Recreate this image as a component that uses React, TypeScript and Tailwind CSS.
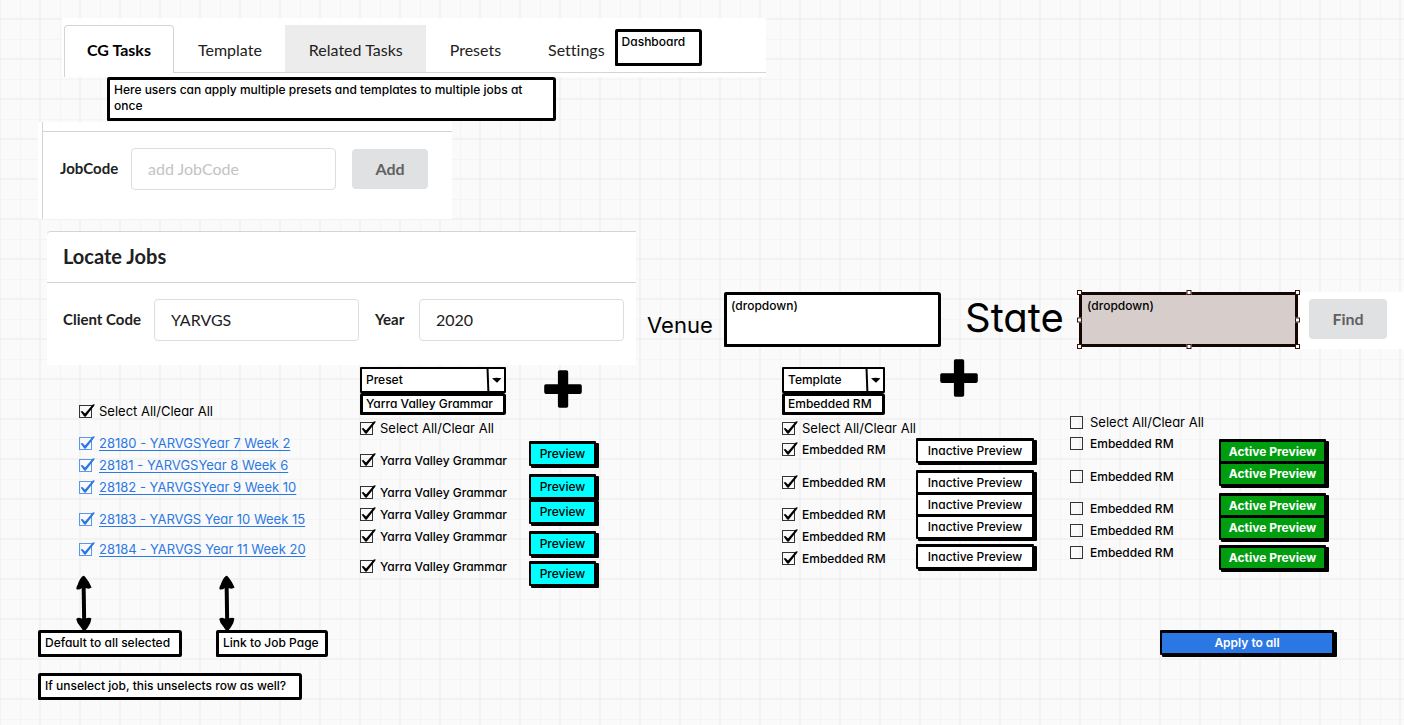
import type { ReactNode } from "react";
import clsx from "clsx";

const SKETCH = "border-[3px] border-black rounded-[2px_3px_2px_1px] bg-white";

type Item = { label: string; gap?: string; className?: string };

function Note({ children, className }: { children: ReactNode; className?: string }) {
  return (
    <div className={clsx(SKETCH, "px-[4px] leading-4 pt-[2px]", className)}>{children}</div>
  );
}

function Check({
  id,
  label,
  checked = true,
  href,
  className,
}: {
  id: string;
  label: string;
  checked?: boolean;
  href?: string;
  className?: string;
}) {
  return (
    <div className={clsx("flex h-[22px] items-center gap-[7px] whitespace-nowrap", className)}>
      <span className={clsx("relative flex", href ? "text-[#2b78e4]" : "text-black")}>
        <input
          id={id}
          type="checkbox"
          defaultChecked={checked}
          aria-label={label}
          className={clsx(
            "peer h-[13px] w-[13px] appearance-none border",
            href ? "border-[#5a98ee]" : "border-[#333]",
          )}
        />
        <svg
          viewBox="0 0 17 15"
          className="pointer-events-none absolute -top-px left-0 hidden h-[15px] w-[17px] peer-checked:block"
        >
          <path
            d="M1.6 7.6 L3.4 7 L6 9.6 L13.8 0.4 L15.6 0.2 L15.4 1.4 L6.6 12.8 L5.2 12.6 Z"
            fill="currentColor"
          />
        </svg>
      </span>
      {href ? (
        <a href={href} className="pt-px text-[#2b78e4] underline underline-offset-2">
          {label}
        </a>
      ) : (
        <label htmlFor={id} className="pt-px">
          {label}
        </label>
      )}
    </div>
  );
}

function CheckList({
  name,
  items,
  checked,
}: {
  name: string;
  items: Item[];
  checked?: boolean;
}) {
  return (
    <>
      {items.map((item, i) => (
        <Check
          key={i}
          id={`${name}-${i}`}
          label={item.label}
          checked={checked}
          className={clsx(item.gap, item.className)}
        />
      ))}
    </>
  );
}

function PreviewButton({
  label,
  className,
  gap,
}: {
  label: string;
  className: string;
  gap?: string;
}) {
  return (
    <div className={clsx("h-[22px]", gap)}>
      <button
        type="button"
        className={clsx(
          "relative block h-[25px] border-2 border-t-[3px] border-black pb-px whitespace-nowrap rounded-[1px] shadow-[2px_2px_0_#000,3px_2px_0_#000]",
          className,
        )}
      >
        {label}
      </button>
    </div>
  );
}

function Combo({ id, value, option }: { id: string; value: string; option: string }) {
  return (
    <div>
      <div className="relative h-[26px]">
        <select
          id={id}
          aria-label={value}
          className="h-full w-full appearance-none rounded-[1px] border-2 border-black bg-white pl-[4px]"
        >
          <option>{value}</option>
        </select>
        <svg
          viewBox="0 0 20 26"
          className="pointer-events-none absolute top-0 right-0 h-[26px] w-[20px]"
        >
          <path d="M1.5 1 L2.4 25" stroke="#000" strokeWidth="2" fill="none" />
          <path d="M6 11.2 Q10.5 10.2 15.4 11.2 L11 15.8 Z" fill="#000" />
        </svg>
      </div>
      <div className={clsx(SKETCH, "h-[22px] pl-[3px] leading-4 whitespace-nowrap")}>{option}</div>
    </div>
  );
}

function Plus({ className }: { className?: string }) {
  return (
    <svg viewBox="0 0 38 38" className={clsx("block h-[38px] w-[38px]", className)}>
      <path
        d="M15.5 0.3h7q1.7 0 1.7 1.7v12.3h12q1.6 0 1.6 1.6v6.2q0 1.8-1.6 1.8h-12v12.2q0 1.7-1.7 1.7h-7q-1.6 0-1.6-1.7V23.9H1.8Q0.2 23.9 0.2 22.1v-6.2q0-1.6 1.6-1.6h12.1V2q0-1.7 1.6-1.7z"
        fill="#000"
      />
    </svg>
  );
}

function Arrow() {
  return (
    <svg viewBox="0 0 16 56" className="block h-14 w-4">
      <path d="M7.6 8 L8.2 48" stroke="#000" strokeWidth="4" />
      <path
        d="M7.2 0.8 Q8.4 0.6 10 3 Q13 6.4 15.6 12.6 Q13 14.4 10.4 13.2 Q8 12.2 6 13 Q3 15.2 0.6 14.2 Q-0.2 12.6 1.8 9.6 Q3.6 3.4 7.2 0.8z"
        fill="#000"
      />
      <path
        d="M0.2 44 Q2.4 42 5.4 43.4 Q9 44.4 11 43 Q14 42.2 15.4 43.4 Q14.8 48 12.6 51 Q10 55.8 8 55.8 Q6.6 55.6 4.6 52 Q1 48.6 0.2 44z"
        fill="#000"
      />
    </svg>
  );
}

const FIELD =
  "h-[42px] w-[205px] rounded-[4px] border border-[#dcdddd] bg-white px-4 pb-[2px] text-base text-[#212121] placeholder:text-[#c3c3c3] outline-none";
const GREY_BUTTON = "h-10 rounded-[4px] bg-[#e0e1e2] text-base font-bold text-[#606162]";
const LABEL = "text-[15px] font-bold text-[#212121]";
const TAB = "flex items-center pt-[2px] pr-[23px] pl-6";

const SELECT_ALL: Item = {
  label: "Select All/Clear All",
  className: "text-[13px] font-normal",
};

const JOBS: Item[] = [
  { label: "28180 - YARVGSYear 7 Week 2", gap: "mt-[10px]" },
  { label: "28181 - YARVGSYear 8 Week 6" },
  { label: "28182 - YARVGSYear 9 Week 10" },
  { label: "28183 - YARVGS Year 10 Week 15", gap: "mt-[10px]" },
  { label: "28184 - YARVGS Year 11 Week 20", gap: "mt-2" },
];

const PRESETS: Item[] = [
  { ...SELECT_ALL, gap: "mt-[2px]" },
  { label: "Yarra Valley Grammar", gap: "mt-[10px]" },
  { label: "Yarra Valley Grammar", gap: "mt-[10px]" },
  { label: "Yarra Valley Grammar" },
  { label: "Yarra Valley Grammar" },
  { label: "Yarra Valley Grammar", gap: "mt-2" },
];

const EMBEDDED: Item[] = [
  { label: "Embedded RM", gap: "-mt-px" },
  { label: "Embedded RM", gap: "mt-[11px]" },
  { label: "Embedded RM", gap: "mt-[10px]" },
  { label: "Embedded RM" },
  { label: "Embedded RM" },
];

const PREVIEW_GAPS = ["mt-[33px]", "mt-[11px]", "mt-[3px]", "mt-[10px]", "mt-2"];
const INACTIVE_GAPS = ["mt-[41px]", "mt-[10px]", "", "", "mt-2"];
const ACTIVE_GAPS = ["mt-[74px]", "", "mt-[10px]", "", "mt-2"];

const HANDLES = [
  "-top-[2px] -left-[2px]",
  "-top-[2px] left-1/2 -translate-x-1/2",
  "-top-[2px] -right-[2px]",
  "top-1/2 -left-[2px] -translate-y-1/2",
  "top-1/2 -right-[2px] -translate-y-1/2",
  "-bottom-[2px] -left-[2px]",
  "-bottom-[2px] left-1/2 -translate-x-1/2",
  "-bottom-[2px] -right-[2px]",
];

export default function App() {
  return (
    <main className="min-h-screen overflow-x-hidden bg-[#fafafa] bg-[linear-gradient(#f2f2f2_2px,transparent_2px),linear-gradient(90deg,#f2f2f2_2px,transparent_2px),linear-gradient(#f4f4f4_1px,transparent_1px),linear-gradient(90deg,#f4f4f4_1px,transparent_1px)] bg-size-[40px_40px] bg-position-[0_18px,39px_0,0_39px,20px_0] pt-[18px] font-['Inter',sans-serif] text-xs font-medium text-black [font-feature-settings:'cv11']">
      <header className="ml-[62px] w-[704px] bg-white pt-[7px] pl-[2px] font-['Lato',sans-serif] text-base font-normal text-[#212121] [font-variant-ligatures:none]">
        <nav className="flex">
          <div className="text-black">
            <a
              href="#cg-tasks"
              className="flex h-12 w-[110px] items-center justify-center rounded-t-[4px] border border-b-0 border-[#d4d4d5] font-bold"
            >
              CG Tasks
            </a>
            <span className="block h-1 border-l border-[#d4d4d5]" />
          </div>
          <div className="flex h-12 flex-1 items-stretch border-b border-[#d4d4d5]">
            <a href="#template" className={TAB}>
              Template
            </a>
            <a href="#related" className={clsx(TAB, "bg-[#ececec]")}>
              Related Tasks
            </a>
            <a href="#presets" className={TAB}>
              Presets
            </a>
            <a href="#settings" className="flex items-center pt-[2px] pr-[10px] pl-6">
              Settings
            </a>
            <Note className="mt-1 h-[37px] w-[87px] font-['Inter',sans-serif] text-xs font-medium text-black">
              Dashboard
            </Note>
          </div>
        </nav>
      </header>

      <Note className="ml-[107px] h-[44px] w-[449px]">
        Here users can apply multiple presets and templates to multiple jobs at once
      </Note>

      <section className="mt-px ml-[38px] w-[414px] bg-white pl-1 font-['Lato',sans-serif] font-normal">
        <div className="border-l border-[#d4d4d5] pt-[9px]">
          <form className="flex h-[88px] items-start border-t border-[#d4d4d5] pt-4 pl-[17px]">
            <label htmlFor="jobcode" className={clsx(LABEL, "w-[71px] leading-10")}>
              JobCode
            </label>
            <input id="jobcode" placeholder="add JobCode" className={FIELD} />
            <button type="button" className={clsx(GREY_BUTTON, "mt-px ml-4 w-[76px]")}>
              Add
            </button>
          </form>
        </div>
      </section>

      <section className="mt-3 flex pl-[47px]">
        <div className="h-[134px] w-[589px] shrink-0 rounded-tl-[4px] border-t border-[#d4d4d5] bg-white font-['Lato',sans-serif] font-normal">
          <h2 className="h-[51px] border-b border-[#d4d4d5] pl-4 text-xl leading-[48px] font-bold text-[#212121]">
            Locate Jobs
          </h2>
          <div className="flex pt-4 pl-4">
            <label htmlFor="client" className={clsx(LABEL, "w-[91px] leading-10")}>
              Client Code
            </label>
            <input id="client" defaultValue="YARVGS" className={FIELD} />
            <label htmlFor="year" className={clsx(LABEL, "ml-4 w-11 leading-10")}>
              Year
            </label>
            <input id="year" defaultValue="2020" className={FIELD} />
          </div>
        </div>

        <div className="mt-[61px] flex h-[57px] flex-1 items-start">
          <label
            htmlFor="venue"
            className="ml-[11px] w-[77px] text-[22px] leading-[66px] font-normal"
          >
            Venue
          </label>
          <select
            id="venue"
            className={clsx(SKETCH, "h-[55px] w-[217px] appearance-none px-[4px] pb-7")}
          >
            <option>(dropdown)</option>
          </select>
          <label htmlFor="state" className="ml-6 w-[114px] text-[40px] leading-[52px] font-normal">
            State
          </label>
          <div className="relative h-[55px] w-[219px]">
            <select
              id="state"
              className="h-full w-full appearance-none rounded-[1px] border-3 border-[#140603] bg-[#d7cdcb] px-[5px] pb-7"
            >
              <option>(dropdown)</option>
            </select>
            {HANDLES.map((place) => (
              <span
                key={place}
                className={clsx("absolute h-[5px] w-[5px] border border-[#3a1408] bg-white", place)}
              />
            ))}
          </div>
          <div className="ml-[2px] h-full flex-1 bg-white pt-[7px] pl-[9px] font-['Lato',sans-serif]">
            <button type="button" className={clsx(GREY_BUTTON, "w-[78px]")}>
              Find
            </button>
          </div>
        </div>
      </section>

      <section className="flex items-start pl-[38px]">
        <div className="w-[322px] shrink-0 pt-[35px]">
          <div className="pl-[41px]">
            <Check id="jobs-all" label={SELECT_ALL.label} className={SELECT_ALL.className} />
            {JOBS.map((job, i) => (
              <Check
                key={i}
                id={`job-${i}`}
                label={job.label}
                href="#job"
                className={clsx(job.gap, "text-[13px] font-normal")}
              />
            ))}
          </div>
          <div className="mt-[15px] flex gap-[127px] pl-[38px]">
            <Arrow />
            <Arrow />
          </div>
          <div className="-mt-px flex gap-[34px]">
            <Note className="h-[27px] w-[144px] whitespace-nowrap">Default to all selected</Note>
            <Note className="h-[27px] w-[112px] whitespace-nowrap">Link to Job Page</Note>
          </div>
          <Note className="mt-4 h-[27px] w-[264px] whitespace-nowrap">
            If unselect job, this unselects row as well?
          </Note>
        </div>

        <div className="w-[169px] shrink-0 pt-[2px]">
          <div className="w-[146px]">
            <Combo id="preset" value="Preset" option="Yarra Valley Grammar" />
          </div>
          <CheckList name="preset-row" items={PRESETS} />
        </div>

        <div className="w-[253px] shrink-0 pt-[5px]">
          <Plus className="ml-[15px]" />
          {PREVIEW_GAPS.map((gap, i) => (
            <PreviewButton key={i} label="Preview" gap={gap} className="w-[67px] bg-[#00ffff]" />
          ))}
        </div>

        <div className="w-[134px] shrink-0 pt-[2px]">
          <div className="w-[103px]">
            <Combo id="template" value="Template" option="Embedded RM" />
          </div>
          <CheckList
            name="template-row"
            items={[{ ...SELECT_ALL, gap: "mt-[2px]" }, ...EMBEDDED]}
          />
        </div>

        <div className="-mt-[6px] w-[154px] shrink-0">
          <Plus className="ml-6" />
          {INACTIVE_GAPS.map((gap, i) => (
            <PreviewButton
              key={i}
              label="Inactive Preview"
              gap={gap}
              className="w-[118px] bg-white"
            />
          ))}
        </div>

        <div className="shrink-0">
          <div className="flex items-start">
            <div className="w-[149px] pt-[46px]">
              <CheckList
                name="active-row"
                checked={false}
                items={[SELECT_ALL, ...EMBEDDED]}
              />
            </div>
            <div>
              {ACTIVE_GAPS.map((gap, i) => (
                <PreviewButton
                  key={i}
                  label="Active Preview"
                  gap={gap}
                  className="w-[107px] bg-[#009e0f] font-bold text-white"
                />
              ))}
            </div>
          </div>
          <PreviewButton
            label="Apply to all"
            gap="mt-[63px] ml-[90px]"
            className="w-[174px] bg-[#2b78e4] font-semibold text-white"
          />
        </div>
      </section>
    </main>
  );
}
